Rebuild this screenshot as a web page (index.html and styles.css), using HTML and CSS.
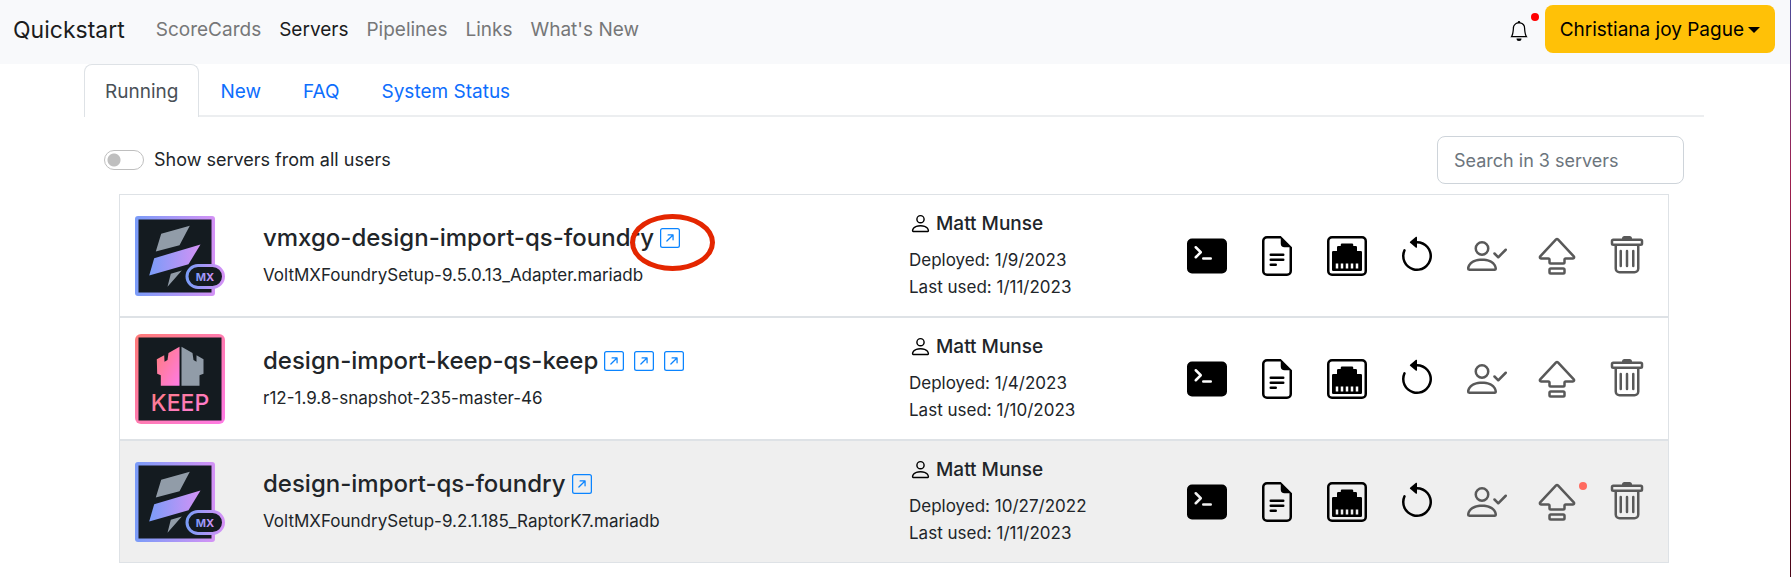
FILE: index.html
```html
<!DOCTYPE html>
<html lang="en">
<head>
<meta charset="utf-8">
<meta name="viewport" content="width=device-width, initial-scale=1">
<title>Quickstart</title>
<link rel="stylesheet" href="styles.css">
</head>
<body>
<svg class="sprite" aria-hidden="true">
  <defs>
    <linearGradient id="volt" x1="0" y1="0" x2="1" y2="0"><stop offset="0" stop-color="#7a9cf8"/><stop offset="1" stop-color="#d492f5"/></linearGradient>
    <linearGradient id="pink" x1="0" y1="0" x2="1" y2="1"><stop offset="0" stop-color="#ff7b78"/><stop offset="1" stop-color="#ff7be6"/></linearGradient>
  </defs>
  <symbol id="i-terminal" viewBox="0 0 16 16"><path d="M0 3a2 2 0 0 1 2-2h12a2 2 0 0 1 2 2v10a2 2 0 0 1-2 2H2a2 2 0 0 1-2-2V3zm9.5 5.5h-3a.5.5 0 0 0 0 1h3a.5.5 0 0 0 0-1zm-6.354-.354a.5.5 0 1 0 .708.708l2-2a.5.5 0 0 0 0-.708l-2-2a.5.5 0 1 0-.708.708L4.793 6.5 3.146 8.146z"/></symbol>
  <symbol id="i-file" viewBox="0 0 16 16"><path d="M5.5 7a.5.5 0 0 0 0 1h5a.5.5 0 0 0 0-1h-5zM5 9.5a.5.5 0 0 1 .5-.5h5a.5.5 0 0 1 0 1h-5a.5.5 0 0 1-.5-.5zm0 2a.5.5 0 0 1 .5-.5h2a.5.5 0 0 1 0 1h-2a.5.5 0 0 1-.5-.5z"/><path d="M9.5 0H4a2 2 0 0 0-2 2v12a2 2 0 0 0 2 2h8a2 2 0 0 0 2-2V4.500L9.500 0zm0 1v2A1.500 1.500 0 0 0 11 4.500h2V14a1 1 0 0 1-1 1H4a1 1 0 0 1-1-1V2a1 1 0 0 1 1-1h5.500z"/></symbol>
  <symbol id="i-ethernet" viewBox="0 0 16 16"><path fill-rule="evenodd" d="M14 13.500v-7a.5.5 0 0 0-.5-.5H12V4.500a.5.5 0 0 0-.5-.5h-1v-.5A.5.5 0 0 0 10 3H6a.5.5 0 0 0-.5.5V4h-1a.5.5 0 0 0-.5.5V6H2.500a.5.5 0 0 0-.5.5v7a.5.5 0 0 0 .5.5h11a.5.5 0 0 0 .5-.5zM3.500 11h1v2h-1zM5.500 11h1v2h-1zM7.500 11h1v2h-1zM9.500 11h1v2h-1zM11.500 11h1v2h-1z"/><path d="M2 0a2 2 0 0 0-2 2v12a2 2 0 0 0 2 2h12a2 2 0 0 0 2-2V2a2 2 0 0 0-2-2H2zM1 2a1 1 0 0 1 1-1h12a1 1 0 0 1 1 1v12a1 1 0 0 1-1 1H2a1 1 0 0 1-1-1V2z" fill-rule="evenodd"/></symbol>
  <symbol id="i-restart" viewBox="0 0 16 16"><path fill-rule="evenodd" d="M8 3a5 5 0 1 1-4.546 2.914.5.5 0 0 0-.908-.417A6 6 0 1 0 8 2v1z"/><path d="M8 4.466V.534a.25.25 0 0 0-.41-.192L5.23 2.308a.25.25 0 0 0 0 .384l2.360 1.966A.25.25 0 0 0 8 4.466z"/></symbol>
  <symbol id="i-assign" viewBox="0 0 16 16"><path d="M6 8a3 3 0 1 0 0-6 3 3 0 0 0 0 6zm2-3a2 2 0 1 1-4 0 2 2 0 0 1 4 0zm4 8c0 1-1 1-1 1H1s-1 0-1-1 1-4 6-4 6 3 6 4zm-1-.004c-.001-.246-.154-.986-.832-1.664C9.516 10.680 8.289 10 6 10c-2.290 0-3.516.68-4.168 1.332-.678.678-.83 1.418-.832 1.664h10z"/><path d="M15.854 5.146a.5.5 0 0 1 0 .708l-3 3a.5.5 0 0 1-.708 0l-1.500-1.500a.5.5 0 0 1 .708-.708L12.500 7.793l2.646-2.647a.5.5 0 0 1 .708 0z"/></symbol>
  <symbol id="i-upgrade" viewBox="0 0 16 16"><path fill-rule="evenodd" d="M7.270 1.047a1 1 0 0 1 1.460 0l6.345 6.770c.6.638.146 1.683-.73 1.683H11.500v1a1 1 0 0 1-1 1h-5a1 1 0 0 1-1-1v-1H1.654C.78 9.500.326 8.455.924 7.816L7.270 1.047zM14.346 8.500 8 1.731 1.654 8.500H4.500a1 1 0 0 1 1 1v1h5v-1a1 1 0 0 1 1-1h2.846zm-9.846 5a1 1 0 0 1 1-1h5a1 1 0 0 1 1 1v1a1 1 0 0 1-1 1h-5a1 1 0 0 1-1-1v-1zm6 0h-5v1h5v-1z"/></symbol>
  <symbol id="i-trash" viewBox="0 0 16 16"><path d="M5.500 5.500A.5.5 0 0 1 6 6v6a.5.5 0 0 1-1 0V6a.5.5 0 0 1 .5-.5zm2.500 0a.5.5 0 0 1 .5.5v6a.5.5 0 0 1-1 0V6a.5.5 0 0 1 .5-.5zm3 .5a.5.5 0 0 0-1 0v6a.5.5 0 0 0 1 0V6z"/><path fill-rule="evenodd" d="M14.500 3a1 1 0 0 1-1 1H13v9a2 2 0 0 1-2 2H5a2 2 0 0 1-2-2V4h-.5a1 1 0 0 1-1-1V2a1 1 0 0 1 1-1H6a1 1 0 0 1 1-1h2a1 1 0 0 1 1 1h3.500a1 1 0 0 1 1 1v1zM4.118 4 4 4.059V13a1 1 0 0 0 1 1h6a1 1 0 0 0 1-1V4.059L11.882 4H4.118zM2.500 3V2h11v1h-11z"/></symbol>
  <symbol id="i-open" viewBox="0 0 16 16"><path fill-rule="evenodd" d="M15 2a1 1 0 0 0-1-1H2a1 1 0 0 0-1 1v12a1 1 0 0 0 1 1h12a1 1 0 0 0 1-1V2zM0 2a2 2 0 0 1 2-2h12a2 2 0 0 1 2 2v12a2 2 0 0 1-2 2H2a2 2 0 0 1-2-2V2zm5.854 8.803a.5.5 0 1 1-.708-.707L9.243 6H6.475a.5.5 0 1 1 0-1h3.975a.5.5 0 0 1 .5.5v3.975a.5.5 0 1 1-1 0V6.707l-4.096 4.096z"/></symbol>
  <symbol id="i-person" viewBox="0 0 16 16"><path d="M8 8a3 3 0 1 0 0-6 3 3 0 0 0 0 6zm2-3a2 2 0 1 1-4 0 2 2 0 0 1 4 0zm4 8c0 1-1 1-1 1H3s-1 0-1-1 1-4 6-4 6 3 6 4zm-1-.004c-.001-.246-.154-.986-.832-1.664C11.516 10.680 10.289 10 8 10c-2.290 0-3.516.68-4.168 1.332-.678.678-.83 1.418-.832 1.664h10z"/></symbol>
  <symbol id="i-bell" viewBox="0 0 16 16"><path d="M8 16a2 2 0 0 0 2-2H6a2 2 0 0 0 2 2zM8 1.918l-.797.161A4.002 4.002 0 0 0 4 6c0 .628-.134 2.197-.459 3.742-.16.767-.376 1.566-.663 2.258h10.244c-.287-.692-.502-1.490-.663-2.258C12.134 8.197 12 6.628 12 6a4.002 4.002 0 0 0-3.203-3.920L8 1.917zM14.220 12c.223.447.481.801.78 1H1c.299-.199.557-.553.78-1C2.680 10.200 3 6.880 3 6c0-2.420 1.720-4.440 4.005-4.901a1 1 0 1 1 1.990 0A5.002 5.002 0 0 1 13 6c0 .88.32 4.200 1.220 6z"/></symbol>
  <symbol id="logo-foundry" viewBox="0 0 90 80">
    <rect width="80" height="80" rx="3" fill="url(#volt)"/><rect x="3.500" y="3.500" width="73" height="73" fill="#141b20"/>
    <path d="M26.200 17.800 54.800 9.800 44.500 29.200 20.800 35.500zM35.800 57.800 46.800 54.500 32.500 70.800z" fill="#919ca8"/>
    <path d="M19.200 42.200 65.500 28.500 53.500 48.200 14.200 59.500z" fill="url(#volt)"/>
    <rect x="52" y="49.500" width="36.500" height="22" rx="11" fill="#141b20" stroke="url(#volt)" stroke-width="3"/>
  </symbol>
  <symbol id="logo-keep" viewBox="0 0 90 90">
    <rect width="90" height="90" rx="6" fill="url(#pink)"/><rect x="3.500" y="3.500" width="83" height="83" fill="#141b20"/>
    <path d="M44.500 12.700 33.500 19 32.500 26 29.500 27.700 29.200 21.300 21.800 25.300 22.200 39.700 25.800 41.300V51.700H44.500z" fill="url(#pink)"/>
    <path d="M46.500 12.700 57.500 19 58.500 26 61.500 27.700 61.500 21.300 68.500 25.300V39.700L64.500 41.300V51.700H46.500z" fill="#919ca8"/>
  </symbol>
</svg>

<header class="navbar">
  <a class="brand" href="#">Quickstart</a>
  <nav class="nav-links" aria-label="Main">
    <a href="#">ScoreCards</a>
    <a class="active" href="#" aria-current="page">Servers</a>
    <a href="#">Pipelines</a>
    <a href="#">Links</a>
    <a href="#">What's New</a>
  </nav>
  <button class="bell" type="button" aria-label="Notifications"><svg><use href="#i-bell"/></svg><span class="dot dot-bell"></span></button>
  <button class="user-menu" type="button" aria-haspopup="true">Christiana joy Pague<span class="caret"></span></button>
</header>

<main class="container">
  <nav class="tabs" aria-label="Servers">
    <a class="tab selected" href="#">Running</a>
    <a class="tab" href="#">New</a>
    <a class="tab" href="#">FAQ</a>
    <a class="tab" href="#">System Status</a>
  </nav>

  <div class="toolbar">
    <label class="switch" for="all-users"><input id="all-users" type="checkbox" role="switch">Show servers from all users</label>
    <input class="search" type="search" placeholder="Search in 3 servers" aria-label="Search in 3 servers">
  </div>

  <ul class="servers">
    <li class="server">
      <svg class="logo" viewBox="0 0 90 80"><use href="#logo-foundry"/><text class="mx" x="70" y="65" text-anchor="middle">MX</text></svg>
      <div class="details">
        <div class="title"><h2>vmxgo-design-import-qs-foundry</h2>
          <a class="open" href="#" aria-label="Open"><svg><use href="#i-open"/></svg><span class="ring"></span></a></div>
        <p>VoltMXFoundrySetup-9.5.0.13_Adapter.mariadb</p>
      </div>
      <div class="usage">
        <h3><svg><use href="#i-person"/></svg>Matt Munse</h3>
        <p>Deployed: 1/9/2023</p>
        <p>Last used: 1/11/2023</p>
      </div>
      <div class="actions">
        <button type="button" aria-label="Terminal"><svg><use href="#i-terminal"/></svg></button>
        <button type="button" aria-label="Logs"><svg><use href="#i-file"/></svg></button>
        <button type="button" aria-label="Ports"><svg><use href="#i-ethernet"/></svg></button>
        <button type="button" aria-label="Restart"><svg><use href="#i-restart"/></svg></button>
        <button type="button" aria-label="Assign owner" disabled><svg><use href="#i-assign"/></svg></button>
        <button type="button" aria-label="Upgrade" disabled><svg><use href="#i-upgrade"/></svg></button>
        <button type="button" aria-label="Delete" disabled><svg><use href="#i-trash"/></svg></button>
      </div>
    </li>
    <li class="server">
      <svg class="logo logo-tall" viewBox="0 0 90 90"><use href="#logo-keep"/><text class="keep" x="45" y="77" text-anchor="middle">KEEP</text></svg>
      <div class="details">
        <div class="title"><h2>design-import-keep-qs-keep</h2>
          <a class="open" href="#" aria-label="Open first"><svg><use href="#i-open"/></svg></a>
          <a class="open" href="#" aria-label="Open second"><svg><use href="#i-open"/></svg></a>
          <a class="open" href="#" aria-label="Open third"><svg><use href="#i-open"/></svg></a></div>
        <p>r12-1.9.8-snapshot-235-master-46</p>
      </div>
      <div class="usage">
        <h3><svg><use href="#i-person"/></svg>Matt Munse</h3>
        <p>Deployed: 1/4/2023</p>
        <p>Last used: 1/10/2023</p>
      </div>
      <div class="actions">
        <button type="button" aria-label="Terminal"><svg><use href="#i-terminal"/></svg></button>
        <button type="button" aria-label="Logs"><svg><use href="#i-file"/></svg></button>
        <button type="button" aria-label="Ports"><svg><use href="#i-ethernet"/></svg></button>
        <button type="button" aria-label="Restart"><svg><use href="#i-restart"/></svg></button>
        <button type="button" aria-label="Assign owner" disabled><svg><use href="#i-assign"/></svg></button>
        <button type="button" aria-label="Upgrade" disabled><svg><use href="#i-upgrade"/></svg></button>
        <button type="button" aria-label="Delete" disabled><svg><use href="#i-trash"/></svg></button>
      </div>
    </li>
    <li class="server shaded">
      <svg class="logo" viewBox="0 0 90 80"><use href="#logo-foundry"/><text class="mx" x="70" y="65" text-anchor="middle">MX</text></svg>
      <div class="details">
        <div class="title"><h2>design-import-qs-foundry</h2>
          <a class="open" href="#" aria-label="Open"><svg><use href="#i-open"/></svg></a></div>
        <p>VoltMXFoundrySetup-9.2.1.185_RaptorK7.mariadb</p>
      </div>
      <div class="usage">
        <h3><svg><use href="#i-person"/></svg>Matt Munse</h3>
        <p>Deployed: 10/27/2022</p>
        <p>Last used: 1/11/2023</p>
      </div>
      <div class="actions">
        <button type="button" aria-label="Terminal"><svg><use href="#i-terminal"/></svg></button>
        <button type="button" aria-label="Logs"><svg><use href="#i-file"/></svg></button>
        <button type="button" aria-label="Ports"><svg><use href="#i-ethernet"/></svg></button>
        <button type="button" aria-label="Restart"><svg><use href="#i-restart"/></svg></button>
        <button type="button" aria-label="Assign owner" disabled><svg><use href="#i-assign"/></svg></button>
        <button type="button" aria-label="Upgrade" disabled><svg><use href="#i-upgrade"/></svg><span class="dot dot-upgrade"></span></button>
        <button type="button" aria-label="Delete" disabled><svg><use href="#i-trash"/></svg></button>
      </div>
    </li>
  </ul>
</main>
</body>
</html>
```
FILE: styles.css
```css
* { box-sizing: border-box; }
html { min-height: 100%; background: #fff; }
body {
  margin: 0;
  padding-right: 1px;
  min-height: 100vh;
  font: 19px/30px Inter, "Liberation Sans", sans-serif;
  color: #212529;
  background: linear-gradient(#4a4a9a, #a02050 30%, #6a0820 70%, #4a0618) right top / 1px 100% no-repeat;
}
.sprite { position: absolute; width: 0; height: 0; }
a { text-decoration: none; color: #0d6efd; }
button, input { font: inherit; color: inherit; }
button { border: 0; background: none; padding: 0; }
h2, h3, p, ul { margin: 0; padding: 0; }
svg { display: block; fill: currentColor; }

.navbar {
  display: flex;
  align-items: center;
  height: 64px;
  padding: 0 15px 6px 13px;
  background: #f8f9fb;
}
.brand { padding-top: 2px; font-size: 23px; color: #1b1c1d; }
.nav-links { display: flex; gap: 18px; margin-left: 31px; margin-right: auto; padding-top: 2px; }
.nav-links a { color: #767778; }
.nav-links .active { color: #1b1c1d; }
.bell { position: relative; width: 20px; height: 20px; margin: 4px 16px 0 0; color: #000; }
.bell svg { width: 20px; height: 20px; }
.dot { position: absolute; width: 8px; height: 8px; border-radius: 50%; background: red; }
.dot-bell { right: -10px; top: -8px; }
.user-menu {
  display: flex;
  align-items: center;
  gap: 4px;
  height: 48px;
  padding: 2px 15px 0;
  border-radius: 8px;
  background: #ffc107;
  color: #000;
}
.caret { border: 6px solid transparent; border-top-color: #000; border-bottom: 0; }

.container { margin: 0 86px 0 84px; }
.tabs { display: flex; border-bottom: 2px solid #eceef0; }
.tab { padding: 12px 20px 8px; border: 1px solid transparent; border-bottom: 0; margin-bottom: -2px; }
.tab.selected {
  color: #495057;
  background: #fff;
  border-color: #dee2e6;
  border-radius: 8px 8px 0 0;
  padding-bottom: 10px;
}
.toolbar {
  display: flex;
  justify-content: space-between;
  align-items: center;
  padding: 19px 20px 10px;
  font-size: 18px;
}
.switch { display: flex; align-items: center; gap: 10px; }
.switch input {
  appearance: none;
  width: 40px;
  height: 20px;
  margin: 0;
  border: 1px solid #bfbfbf;
  border-radius: 10px;
  background: radial-gradient(circle at 9px 9px, #bfbfbf 6px, transparent 7px);
}
.search {
  width: 247px;
  height: 48px;
  padding: 0 16px;
  border: 1px solid #ced4da;
  border-radius: 8px;
  background: #fff;
  appearance: none;
}
.search::placeholder { color: #6c757d; opacity: 1; }

.servers { list-style: none; margin: 0 35px; border: 1px solid #dee2e6; }
.server {
  display: grid;
  grid-template-columns: 128px 1fr 278px auto;
  align-items: center;
  min-height: 121px;
  padding: 0 21px 0 15px;
}
.server + .server { min-height: 123px; border-top: 2px solid #dee2e6; }
.shaded { background: #efefef; }
.logo { width: 90px; height: 80px; }
.logo-tall { height: 90px; }
.mx { font: 700 11px Inter, sans-serif; fill: url(#volt); }
.keep { font: 500 23px Inter, sans-serif; fill: url(#pink); }
.title { display: flex; align-items: center; gap: 6px; margin-bottom: 9px; }
.title h2 { font-size: 24px; font-weight: 500; line-height: 30px; }
.details p, .usage p { font-size: 17px; line-height: 27px; }
.open { position: relative; color: #0a84ff; }
.open + .open { margin-left: 4px; }
.open svg { width: 20px; height: 20px; }
.ring {
  position: absolute;
  left: -30px;
  top: -14px;
  width: 85px;
  height: 57px;
  border: 5px solid #e42600;
  border-radius: 50%;
}
.usage h3 {
  display: flex;
  align-items: center;
  gap: 4px;
  margin-bottom: 11px;
  font-size: 19px;
  font-weight: 500;
  line-height: 25px;
}
.usage h3 svg { width: 23px; height: 23px; color: #000; }
.actions { display: flex; gap: 30px; color: #000; }
.actions button { position: relative; width: 40px; height: 40px; }
.actions svg { width: 40px; height: 40px; }
.actions button:disabled { color: #595959; }
.dot-upgrade { right: -10px; top: 0; background: #ff6b60; }
```
